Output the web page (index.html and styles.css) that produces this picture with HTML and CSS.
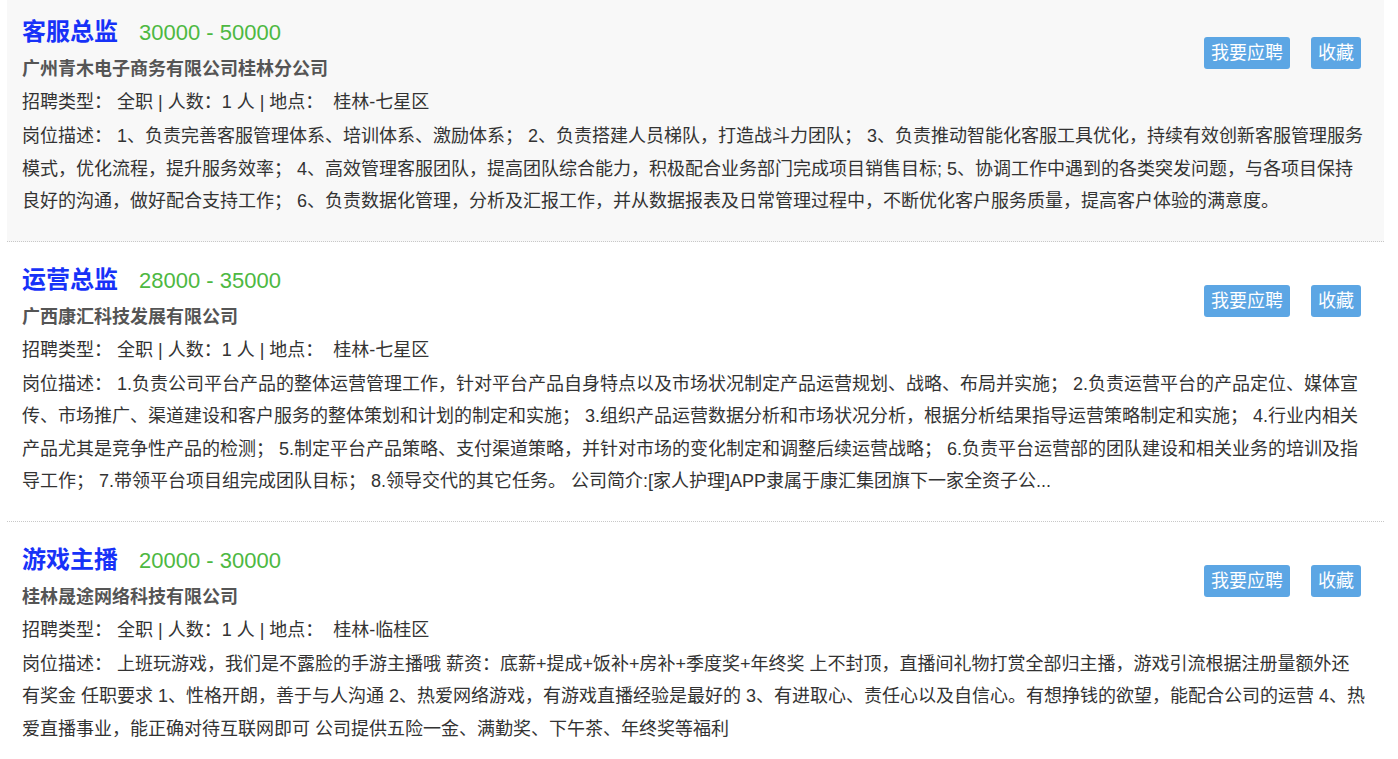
FILE: index.html
```html
<!DOCTYPE html>
<html lang="zh-CN">
  <head>
    <meta charset="UTF-8" />
    <meta name="viewport" content="width=device-width, initial-scale=1.0" />
    <title>职位列表</title>
    <link rel="stylesheet" href="styles.css">
  </head>
  <body>
    <div class="job-list">
      <div class="job-item active">
        <div class="job-head">
          <div class="job-info">
            <div class="job-title">
              <a href="#" class="job-name">客服总监</a>
              <span class="job-salary">30000 - 50000</span>
            </div>
            <div class="job-company">广州青木电子商务有限公司桂林分公司</div>
          </div>
          <div class="job-actions">
            <button type="button" class="btn">我要应聘</button>
            <button type="button" class="btn">收藏</button>
          </div>
        </div>
        <div class="job-meta">招聘类型：&nbsp;全职 | 人数：1 人 | 地点：&nbsp; 桂林-七星区</div>
        <div class="job-desc">岗位描述： 1、负责完善客服管理体系、培训体系、激励体系； 2、负责搭建人员梯队，打造战斗力团队； 3、负责推动智能化客服工具优化，持续有效创新客服管理服务模式，优化流程，提升服务效率； 4、高效管理客服团队，提高团队综合能力，积极配合业务部门完成项目销售目标; 5、协调工作中遇到的各类突发问题，与各项目保持良好的沟通，做好配合支持工作； 6、负责数据化管理，分析及汇报工作，并从数据报表及日常管理过程中，不断优化客户服务质量，提高客户体验的满意度。</div>
      </div>

      <div class="job-item">
        <div class="job-head">
          <div class="job-info">
            <div class="job-title">
              <a href="#" class="job-name">运营总监</a>
              <span class="job-salary">28000 - 35000</span>
            </div>
            <div class="job-company">广西康汇科技发展有限公司</div>
          </div>
          <div class="job-actions">
            <button type="button" class="btn">我要应聘</button>
            <button type="button" class="btn">收藏</button>
          </div>
        </div>
        <div class="job-meta">招聘类型：&nbsp;全职 | 人数：1 人 | 地点：&nbsp; 桂林-七星区</div>
        <div class="job-desc">岗位描述： 1.负责公司平台产品的整体运营管理工作，针对平台产品自身特点以及市场状况制定产品运营规划、战略、布局并实施； 2.负责运营平台的产品定位、媒体宣传、市场推广、渠道建设和客户服务的整体策划和计划的制定和实施； 3.组织产品运营数据分析和市场状况分析，根据分析结果指导运营策略制定和实施； 4.行业内相关产品尤其是竞争性产品的检测； 5.制定平台产品策略、支付渠道策略，并针对市场的变化制定和调整后续运营战略； 6.负责平台运营部的团队建设和相关业务的培训及指导工作； 7.带领平台项目组完成团队目标； 8.领导交代的其它任务。 公司简介:[家人护理]APP隶属于康汇集团旗下一家全资子公...</div>
      </div>

      <div class="job-item">
        <div class="job-head">
          <div class="job-info">
            <div class="job-title">
              <a href="#" class="job-name">游戏主播</a>
              <span class="job-salary">20000 - 30000</span>
            </div>
            <div class="job-company">桂林晟途网络科技有限公司</div>
          </div>
          <div class="job-actions">
            <button type="button" class="btn">我要应聘</button>
            <button type="button" class="btn">收藏</button>
          </div>
        </div>
        <div class="job-meta">招聘类型：&nbsp;全职 | 人数：1 人 | 地点：&nbsp; 桂林-临桂区</div>
        <div class="job-desc">岗位描述： 上班玩游戏，我们是不露脸的手游主播哦 薪资：底薪+提成+饭补+房补+季度奖+年终奖 上不封顶，直播间礼物打赏全部归主播，游戏引流根据注册量额外还有奖金 任职要求 1、性格开朗，善于与人沟通 2、热爱网络游戏，有游戏直播经验是最好的 3、有进取心、责任心以及自信心。有想挣钱的欲望，能配合公司的运营 4、热爱直播事业，能正确对待互联网即可 公司提供五险一金、满勤奖、下午茶、年终奖等福利</div>
      </div>
    </div>
  </body>
</html>
```

FILE: styles.css
```css
body {
  margin: 0;
  background-color: #fff;
  color: #333;
  font-family: "Liberation Sans", "Noto Sans CJK SC", sans-serif;
  font-size: 18px;
}

.job-list {
  margin: -6px 14px 0 7px;
}

.job-item {
  padding: 21px 17px 23px 15px;
  border-bottom: 1px dotted #c8c8c8;
}
.job-item.active {
  background-color: #f8f8f8;
}

.job-head {
  display: flex;
  justify-content: space-between;
  align-items: flex-start;
}

.job-title {
  line-height: 38px;
  white-space: nowrap;
}
.job-name {
  font-size: 24px;
  line-height: 1;
  font-weight: bold;
  color: #1732f8;
  text-decoration: none;
}
.job-salary {
  margin-left: 16px;
  font-size: 22px;
  line-height: 1;
  color: #4db842;
}

.job-company {
  line-height: 33px;
  font-weight: bold;
  color: #555;
}

.job-actions {
  display: flex;
  gap: 21px;
  padding-top: 22px;
  padding-right: 6px;
}
.btn {
  height: 32px;
  padding: 0 7px;
  border: none;
  border-radius: 3px;
  background-color: #5ca6e4;
  color: #fff;
  font-family: inherit;
  font-size: 18px;
  line-height: 32px;
  cursor: pointer;
}
.btn:hover {
  background-color: #4a94d3;
}

.job-meta {
  line-height: 32px;
}

.job-desc {
  margin-top: 2px;
  line-height: 32.5px;
}
```
